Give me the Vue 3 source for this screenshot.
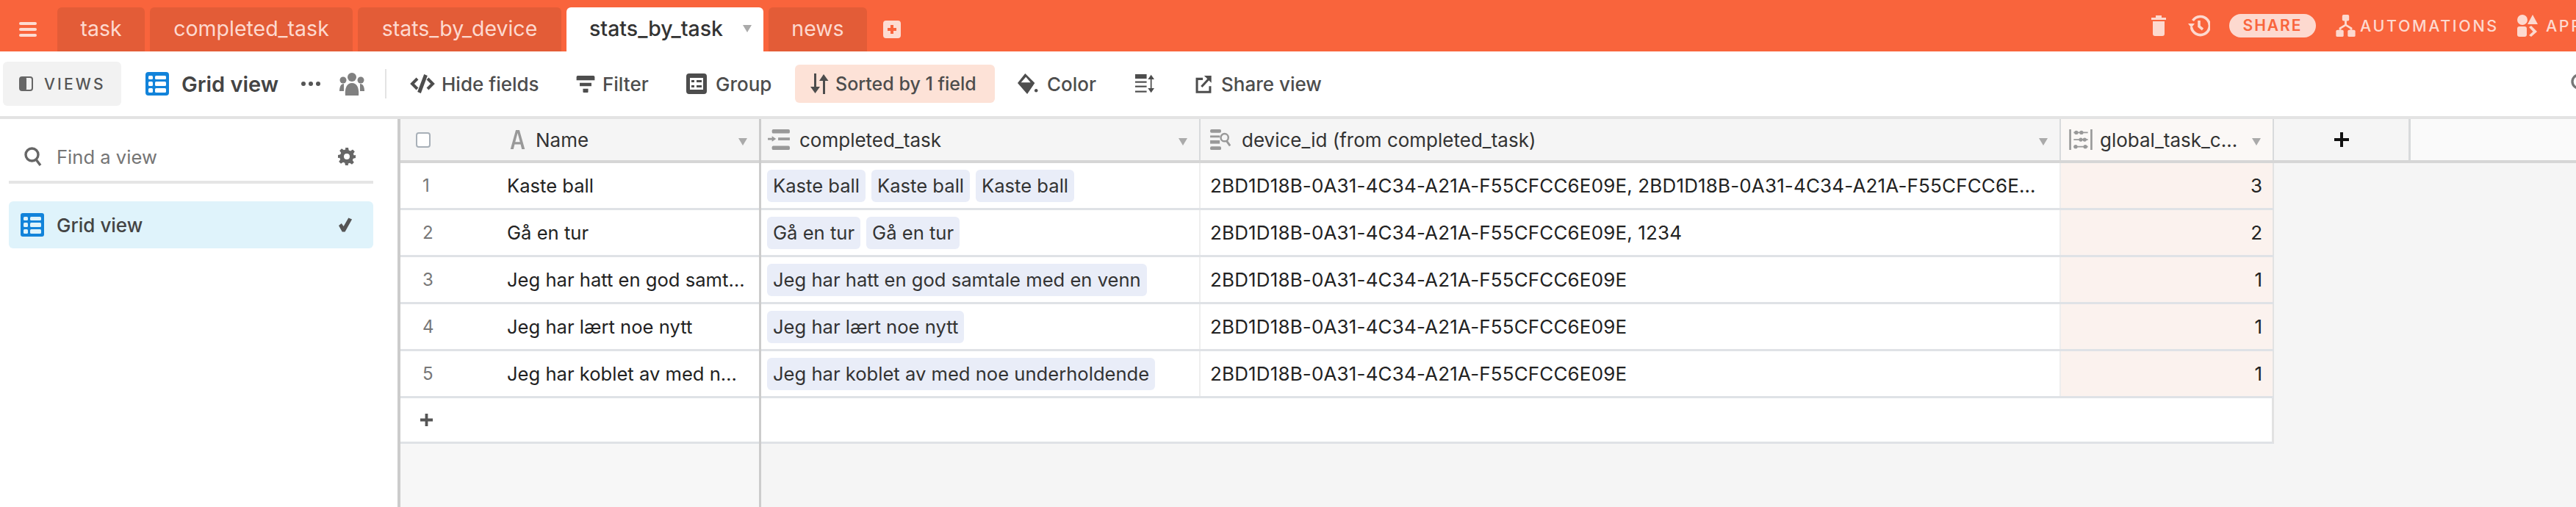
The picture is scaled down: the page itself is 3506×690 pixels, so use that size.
<script setup>
const tabs = [
  { name: 'task', w: 119 },
  { name: 'completed_task', w: 276 },
  { name: 'stats_by_device', w: 277 },
  { name: 'stats_by_task', w: 268, active: true },
  { name: 'news', w: 134 }
]
const rows = [
  { n: 1, name: 'Kaste ball', pills: ['Kaste ball', 'Kaste ball', 'Kaste ball'], device: '2BD1D18B-0A31-4C34-A21A-F55CFCC6E09E, 2BD1D18B-0A31-4C34-A21A-F55CFCC6E09E, 2BD1D18B-0A31-4C34-A21A-F55CFCC6E09E', count: 3 },
  { n: 2, name: 'Gå en tur', pills: ['Gå en tur', 'Gå en tur'], device: '2BD1D18B-0A31-4C34-A21A-F55CFCC6E09E, 1234', count: 2 },
  { n: 3, name: 'Jeg har hatt en god samtale med en venn', pills: ['Jeg har hatt en god samtale med en venn'], device: '2BD1D18B-0A31-4C34-A21A-F55CFCC6E09E', count: 1 },
  { n: 4, name: 'Jeg har lært noe nytt', pills: ['Jeg har lært noe nytt'], device: '2BD1D18B-0A31-4C34-A21A-F55CFCC6E09E', count: 1 },
  { n: 5, name: 'Jeg har koblet av med noe underholdende', pills: ['Jeg har koblet av med noe underholdende'], device: '2BD1D18B-0A31-4C34-A21A-F55CFCC6E09E', count: 1 }
]
</script>

<template>
  <div class="app">
    <header class="topbar">
      <svg class="menu" viewBox="0 0 24 20"><rect y="0" width="24" height="4" rx="2"/><rect y="8" width="24" height="4" rx="2"/><rect y="16" width="24" height="4" rx="2"/></svg>
      <nav class="tabs">
        <div v-for="t in tabs" :key="t.name" class="tab" :class="{ active: t.active }" :style="{ width: t.w + 'px' }">
          <span>{{ t.name }}</span>
          <i v-if="t.active" class="tri tab-tri"></i>
        </div>
      </nav>
      <svg class="addtab" viewBox="0 0 24 24"><path fill-rule="evenodd" d="M4 0h16a4 4 0 0 1 4 4v16a4 4 0 0 1-4 4H4a4 4 0 0 1-4-4V4a4 4 0 0 1 4-4zm6 6v4H6v4h4v4h4v-4h4v-4h-4V6z"/></svg>
      <div class="top-right">
        <svg class="ti trash" viewBox="0 0 20 28"><path d="M6 0h8v3h6v3H0V3h6zM2 8h16v17a3 3 0 0 1-3 3H5a3 3 0 0 1-3-3z"/></svg>
        <svg class="hist" viewBox="0 0 30 30"><g fill="none" stroke="#fdd9cf" stroke-width="3.6"><path d="M6.500 8a12.500 12.500 0 1 1-2 9"/><path d="M15 8v8l5 4"/></g><path d="M0 12h9l-4.500 6z" fill="#fdd9cf"/></svg>
        <div class="share">SHARE</div>
        <svg class="ti auto" viewBox="0 0 28 32"><rect x="9" y="0" width="10" height="9" rx="2"/><path d="M12.500 8h3v6l8 5v3h-3v-1.500l-6.500-4-6.500 4V22h-3v-3l8-5z"/><rect x="0" y="22" width="11" height="10" rx="2"/><rect x="17" y="22" width="11" height="10" rx="2"/></svg>
        <span class="top-label auto-label">AUTOMATIONS</span>
        <svg class="ti apps" viewBox="0 0 28 30"><circle cx="7" cy="7" r="7"/><path d="M21 0l7 13H14z"/><rect x="0" y="16" width="13" height="14" rx="3"/><path d="M16 17l3-2 8 8-8 7-3-2 5.500-5z"/></svg>
        <span class="top-label">APPS</span>
      </div>
    </header>

    <div class="toolbar">
      <div class="views">
        <svg class="ic16" viewBox="0 0 19 20"><rect x="1" y="1" width="17" height="18" rx="3" fill="none" stroke="#666" stroke-width="2"/><rect x="1" y="1" width="9" height="18" rx="2" fill="#666"/></svg>
        <span>VIEWS</span>
      </div>
      <svg class="gridicon big" viewBox="0 0 32 32"><rect width="32" height="32" rx="4" fill="#1283da"/><g fill="#fff"><rect x="4" y="5" width="6" height="5" rx="1.500"/><rect x="13" y="5" width="15" height="5" rx="1.500"/><rect x="4" y="13" width="6" height="6" rx="1.500"/><rect x="13" y="13" width="15" height="6" rx="1.500"/><rect x="4" y="22" width="6" height="6" rx="1.500"/><rect x="13" y="22" width="15" height="6" rx="1.500"/></g></svg>
      <span class="viewname">Grid view</span>
      <svg class="dots" viewBox="0 0 26 6"><circle cx="3" cy="3" r="3"/><circle cx="13" cy="3" r="3"/><circle cx="23" cy="3" r="3"/></svg>
      <svg class="people" viewBox="0 0 34 32"><circle cx="17" cy="7" r="6"/><circle cx="5" cy="11" r="4.500"/><circle cx="29" cy="11" r="4.500"/><path d="M8 32c-1-10 2-17 9-17s10 7 9 17z"/><path d="M0 26c0-6 2-10 6-10v10zM34 26c0-6-2-10-6-10v10z"/></svg>
      <div class="divider"></div>
      <div class="tool tool-hide">
        <svg viewBox="0 0 34 26" class="t-ic hide-ic"><g fill="none" stroke="#4d4d4d" stroke-width="4"><path d="M10 6l-7 7 7 7"/><path d="M24 6l7 7-7 7"/><path d="M21.500 1L12.500 25" stroke-width="5"/></g></svg>
        <span>Hide fields</span>
      </div>
      <div class="tool tool-filter">
        <svg viewBox="0 0 28 26" class="t-ic filter-ic"><path fill="#4d4d4d" d="M0 2a2 2 0 0 1 2-2h24a2 2 0 0 1 2 2v5H0zM5 11h18v5H5zM10 20h8v5a1 1 0 0 1-1 1h-6a1 1 0 0 1-1-1z"/></svg>
        <span>Filter</span>
      </div>
      <div class="tool tool-group">
        <svg viewBox="0 0 28 28" class="t-ic group-ic"><path fill="#4d4d4d" fill-rule="evenodd" d="M4 0h20a4 4 0 0 1 4 4v20a4 4 0 0 1-4 4H4a4 4 0 0 1-4-4V4a4 4 0 0 1 4-4zm1 6v16h18V6zm2 3h4v3H7zm7 0h7v3h-7zM7 16h4v3H7zm7 0h7v3h-7z"/></svg>
        <span>Group</span>
      </div>
      <div class="tool sorted">
        <svg viewBox="0 0 26 28" class="t-ic sort-ic"><path fill="#4d4d4d" d="M6 0h3v18h5l-6.500 9L1 18h5zM19 1l6.500 9H21v18h-3V10h-5z"/></svg>
        <span>Sorted by 1 field</span>
      </div>
      <div class="tool tool-color">
        <svg viewBox="0 0 30 30" class="t-ic color-ic"><path fill="#4d4d4d" fill-rule="evenodd" d="M11 0l14 14-11 16L0 14zm1 5l-7 8h14z"/><circle cx="27" cy="25" r="2.400" fill="#4d4d4d"/></svg>
        <span>Color</span>
      </div>
      <svg class="rowh" viewBox="0 0 30 30"><g fill="#4d4d4d"><rect x="0" y="0" width="18" height="7"/><rect x="0" y="11" width="18" height="2.500"/><rect x="0" y="18" width="18" height="2.500"/><rect x="0" y="26" width="18" height="2.500"/><path d="M25 1l5 7h-4v14h4l-5 7-5-7h4V8h-4z"/></g></svg>
      <div class="tool tool-share">
        <svg viewBox="0 0 24 28" class="t-ic share-ic"><g fill="none" stroke="#4d4d4d" stroke-width="3.400"><path d="M11 6H2v20h20v-9"/><path d="M9 18L21 5"/></g><path fill="#4d4d4d" d="M13 1h11v11z"/></svg>
        <span>Share view</span>
      </div>
      <svg class="far-search" viewBox="0 0 24 24" fill="none" stroke="#777" stroke-width="3.400"><circle cx="12" cy="11" r="9"/></svg>
    </div>

    <main class="main">
      <aside class="sidebar">
        <div class="findrow">
          <svg class="search" viewBox="0 0 24 26" fill="none" stroke="#666" stroke-width="3.400"><circle cx="10.500" cy="10.500" r="8.500"/><path d="M16 17l6 8"/></svg>
          <span class="findtext">Find a view</span>
          <svg class="gear" viewBox="0 0 24 24"><path fill="#666" fill-rule="evenodd" d="M10 0h4l.7 3.500 2.300 1 3-2 2.800 2.800-2 3 1 2.300L24 10v4l-3.200.7-1 2.300 2 3-2.800 2.800-3-2-2.300 1L14 24h-4l-.7-3.200-2.300-1-3 2L1.200 19l2-3-1-2.300L0 14v-4l3.200-.7 1-2.300-2-3L5 1.200l3 2 2.300-1zM12 8a4 4 0 1 0 0 8 4 4 0 0 0 0-8z"/></svg>
        </div>
        <div class="sideline"></div>
        <div class="viewitem">
          <svg class="gridicon small" viewBox="0 0 32 32"><rect width="32" height="32" rx="3" fill="#1283da"/><g fill="#dff3fb"><rect x="4" y="5" width="6" height="5" rx="1.500"/><rect x="13" y="5" width="15" height="5" rx="1.500"/><rect x="4" y="13" width="6" height="6" rx="1.500"/><rect x="13" y="13" width="15" height="6" rx="1.500"/><rect x="4" y="22" width="6" height="6" rx="1.500"/><rect x="13" y="22" width="15" height="6" rx="1.500"/></g></svg>
          <span>Grid view</span>
          <svg class="check" viewBox="0 0 20 20"><path fill="#555" d="M0 11l4-3 3 4L14 0l5 2-10 18H5z"/></svg>
        </div>
      </aside>

      <section class="pane left-pane">
        <div class="hrow">
          <div class="hleft">
            <span class="checkbox"></span>
            <svg class="afont" viewBox="0 0 24 32"><path fill="#999" d="M9 0h6l9 32h-5l-2-8H7l-2 8H0zm-1 20h8L12 5z"/></svg>
            <span class="htext">Name</span>
            <i class="tri hdr-tri"></i>
          </div>
        </div>
        <div v-for="r in rows" :key="r.n" class="row lrow">
          <span class="rownum">{{ r.n }}</span>
          <span class="rname">{{ r.name }}</span>
        </div>
        <div class="row lrow addrow">
          <svg class="addplus" viewBox="0 0 18 18"><path fill="#555" d="M7 0h4v7h7v4h-7v7H7v-7H0V7h7z"/></svg>
        </div>
      </section>

      <section class="pane right-pane">
        <div class="hrow">
          <div class="hcell c1">
            <svg class="fi" viewBox="0 0 32 30"><g fill="#999"><rect x="6" y="0" width="26" height="6" rx="2"/><rect x="15" y="12" width="17" height="4"/><path d="M0 12.500h6V10l6 4-6 4v-2.500H0z"/><rect x="6" y="24" width="26" height="6" rx="2"/></g></svg>
            <span class="htext">completed_task</span>
            <i class="tri hdr-tri"></i>
          </div>
          <div class="hcell c2">
            <svg class="fi" viewBox="0 0 32 30"><g fill="#999"><rect x="0" y="0" width="16" height="5" rx="2"/><rect x="0" y="9" width="14" height="3"/><rect x="0" y="16" width="14" height="5"/><rect x="0" y="25" width="16" height="5" rx="2"/></g><circle cx="21" cy="12" r="5.500" fill="none" stroke="#999" stroke-width="2.600"/><path d="M24 17l5 7" stroke="#999" stroke-width="3"/></svg>
            <span class="htext">device_id (from completed_task)</span>
            <i class="tri hdr-tri"></i>
          </div>
          <div class="hcell c3 tinted">
            <svg class="fi abacus" viewBox="0 0 36 32"><g fill="#999"><rect x="0" y="0" width="3" height="32"/><rect x="33" y="0" width="3" height="32"/><rect x="7" y="4" width="22" height="2"/><circle cx="11" cy="5" r="3"/><circle cx="19" cy="5" r="3"/><rect x="7" y="15" width="22" height="2"/><circle cx="18" cy="16" r="3"/><circle cx="24" cy="16" r="3"/><rect x="7" y="26" width="22" height="2"/><circle cx="10" cy="27" r="3"/><circle cx="25" cy="27" r="3"/></g></svg>
            <span class="htext">global_task_c...</span>
            <i class="tri hdr-tri"></i>
          </div>
          <div class="hcell c4">
            <svg class="plus" viewBox="0 0 20 20"><path fill="#111" d="M8 0h4v8h8v4h-8v8H8v-8H0V8h8z"/></svg>
          </div>
          <div class="hfill"></div>
        </div>
        <div v-for="r in rows" :key="r.n" class="row rrow">
          <div class="cell c1">
            <span v-for="(p, i) in r.pills" :key="i" class="pill">{{ p }}</span>
          </div>
          <div class="cell c2"><span class="devtext">{{ r.device }}</span></div>
          <div class="cell c3 num">{{ r.count }}</div>
        </div>
        <div class="row rrow addrow-r"></div>
      </section>
    </main>
  </div>
</template>

<style>
html, body { margin: 0; padding: 0; background: #fff; }
</style>

<style scoped>
.app {
  width: 3506px; height: 690px; overflow: hidden; display: flex; flex-direction: column;
  font-family: Inter, "Noto Sans", sans-serif; font-size: 26px; color: #222; background: #fff;
}
.topbar { height: 70px; flex: none; background: #f9643c; display: flex; align-items: flex-end; position: relative; }
.menu { width: 24px; height: 20px; fill: #fddcd2; margin: 0 28px 20px 26px; flex: none; }
.tabs { display: flex; gap: 7px; height: 60px; }
.tab {
  height: 60px; background: #e35c37; border-radius: 6px 6px 0 0; color: #fdd9cf;
  display: flex; align-items: center; justify-content: center; font-size: 28.5px; position: relative; padding-bottom: 4px; box-sizing: border-box;
}
.tab.active { background: #fff; color: #333; font-weight: 500; padding-right: 24px; }
.tab-tri { position: absolute; right: 16px; top: 24px; }
.tri { display: block; width: 0; height: 0; border-left: 6px solid transparent; border-right: 6px solid transparent; border-top: 10px solid #aaa; flex: none; }
.addtab { width: 24px; height: 24px; fill: #fddcd2; margin: 0 0 18px 22px; flex: none; }
.top-right { position: absolute; left: 2928px; top: 0; width: 578px; height: 70px; display: flex; align-items: center; overflow: hidden; white-space: nowrap; }
.ti { fill: #fdd9cf; flex: none; }
.trash { width: 20px; height: 28px; margin-right: 30px; margin-top: -1px; }
.hist { width: 30px; height: 30px; margin-right: 26px; margin-top: -1px; flex: none; }
.share {
  width: 118px; height: 32px; border-radius: 16px; background: #fdd9cf; color: #f9643c; flex: none;
  font-size: 21px; font-weight: 600; letter-spacing: 2px; display: flex; align-items: center; justify-content: center; margin-right: 27px; margin-top: -1px;
}
.auto { width: 27px; height: 30px; margin-right: 6px; }
.top-label { color: #fdd9cf; font-size: 21.5px; font-weight: 500; letter-spacing: 2.6px; flex: none; }
.auto-label { width: 186px; margin-right: 28px; }
.apps { width: 28px; height: 30px; margin-right: 11px; }

.toolbar { height: 88px; flex: none; box-sizing: content-box; border-bottom: 4px solid #e3e3e3; display: flex; align-items: center; position: relative; font-size: 26px; color: #4d4d4d; }
.views { width: 161px; height: 60px; margin-left: 4px; background: #f2f2f2; border-radius: 6px; display: flex; align-items: center; color: #555; font-size: 21px; font-weight: 500; letter-spacing: 3.2px; box-sizing: border-box; padding-left: 22px; gap: 15px; flex: none; }
.ic16 { width: 19px; height: 20px; flex: none; }
.gridicon { flex: none; }
.gridicon.big { width: 32px; height: 32px; margin-left: 33px; }
.viewname { font-size: 29px; font-weight: 600; color: #444; margin-left: 17px; width: 133px; white-space: nowrap; flex: none; }
.dots { width: 26px; height: 6px; fill: #555; margin-left: 30px; flex: none; }
.people { width: 34px; height: 32px; fill: #808080; margin-left: 26px; flex: none; }
.divider { width: 2px; height: 40px; background: #e3e3e3; margin-left: 28px; flex: none; }
.tool { display: flex; align-items: center; white-space: nowrap; flex: none; font-weight: 500; }
.t-ic { height: 26px; flex: none; }
.hide-ic { width: 34px; }
.filter-ic { width: 28px; height: 23px; }
.group-ic { width: 28px; height: 28px; }
.sort-ic { width: 26px; height: 28px; }
.color-ic { width: 30px; height: 28px; }
.share-ic { width: 24px; height: 25px; }
.tool span { margin-left: 9px; }
.tool-hide { margin-left: 32px; width: 176px; }
.tool-filter { margin-left: 49px; width: 102px; }
.tool-group { margin-left: 49px; width: 116px; }
.tool-group span { margin-left: 12px; }
.sorted { margin-left: 32px; width: 272px; height: 52px; background: #fde2d7; border-radius: 6px; box-sizing: border-box; padding-left: 20px; font-size: 25px; }
.tool-color { margin-left: 30px; width: 107px; }
.tool-color span { margin-left: 11px; }
.rowh { width: 30px; height: 26px; margin-left: 52px; flex: none; }
.tool-share { margin-left: 53px; }
.tool-share span { margin-left: 12px; }
.far-search { position: absolute; left: 3498px; top: 30px; width: 24px; height: 24px; }

.main { flex: 1; display: flex; min-height: 0; background: #f5f5f5; }
.sidebar { width: 541px; flex: none; background: #fff; border-right: 4px solid #ccc; display: flex; flex-direction: column; }
.findrow { height: 84px; padding-top: 18px; box-sizing: border-box; display: flex; align-items: center; flex: none; position: relative; color: #757575; font-size: 25.6px; }
.search { width: 24px; height: 26px; margin-left: 33px; flex: none; }
.findtext { margin-left: 20px; flex: 1; }
.gear { width: 24px; height: 24px; margin-right: 57px; flex: none; }
.sideline { height: 4px; background: #e5e5e5; margin: 0 33px 0 12px; flex: none; }
.viewitem { height: 64px; margin: 24px 33px 0 12px; border-radius: 6px; background: #dff3fb; display: flex; align-items: center; color: #444; font-size: 26px; font-weight: 500; flex: none; }
.gridicon.small { width: 32px; height: 32px; margin-left: 16px; }
.viewitem span { margin-left: 17px; flex: 1; }
.check { width: 19px; height: 20px; margin-right: 28px; flex: none; }

.pane { display: flex; flex-direction: column; }
.left-pane { width: 491px; flex: none; background: #f7f7f7; border-right: 3px solid #ccc; box-sizing: border-box; }
.right-pane { flex: 1; min-width: 0; }
.hrow { height: 60px; flex: none; display: flex; background: #f5f5f5; box-sizing: border-box; border-bottom: 4px solid #d6d6d6; position: relative; }
.hleft { flex: 1; display: flex; align-items: center; position: relative; }
.checkbox { width: 20px; height: 21px; border: 2px solid #a8b0b8; border-radius: 4px; background: #fff; margin-left: 21px; flex: none; box-sizing: border-box; }
.afont { width: 23px; height: 26px; margin-left: 107px; flex: none; }
.htext { font-size: 26px; color: #333; margin-left: 12px; white-space: nowrap; overflow: hidden; }
.hleft .htext { margin-left: 13px; }
.hdr-tri { position: absolute; right: 16px; top: 26px; }
.hcell { height: 56px; flex: none; display: flex; align-items: center; position: relative; box-sizing: border-box; border-right: 2px solid #d8dadc; }
.c1 { width: 598px; }
.c2 { width: 1171px; }
.c3 { width: 290px; }
.c4 { width: 186px; justify-content: center; border-right-width: 3px; }
.hfill { flex: 1; background: #fafafa; }
.fi { width: 32px; height: 28px; margin-left: 8px; flex: none; }
.c2 .fi { margin-left: 12px; }
.abacus { width: 32px; height: 28px; margin-left: 11px; }
.c3 .htext { margin-left: 10px; }
.tinted { background: #fbf8f6; }
.plus { width: 20px; height: 20px; }
.row { display: flex; background: #fff; box-sizing: border-box; flex: none; }
.lrow { height: 64px; border-bottom: 3px solid #dfe2e6; align-items: center; }
.rownum { width: 145px; padding-left: 30px; box-sizing: border-box; color: #777; font-size: 24px; flex: none; }
.rname { width: 326px; flex: none; white-space: nowrap; overflow: hidden; text-overflow: ellipsis; font-size: 25.6px; color: #222; }
.addrow { height: 62px; }
.addplus { width: 17px; height: 17px; margin-left: 27px; }
.rrow { width: 2059px; height: 64px; border-bottom: 3px solid #dfe2e6; }
.cell { height: 61px; box-sizing: border-box; display: flex; align-items: center; flex: none; border-right: 2px solid #eeeeee; }
.pill { height: 44px; padding: 0 8px; margin-right: 8px; background: #e9edf8; border-radius: 6px; display: flex; align-items: center; color: #333; font-size: 25.6px; white-space: nowrap; box-sizing: border-box; }
.cell.c1 { padding-left: 8px; }
.cell.c2 { padding: 0 20px 0 13px; }
.devtext { display: block; width: 100%; white-space: nowrap; overflow: hidden; text-overflow: ellipsis; font-size: 26px; letter-spacing: 0.15px; color: #222; }
.num { justify-content: flex-end; padding-right: 14px; background: #fbf2ee; font-size: 26px; color: #222; border-right: 2px solid #e2e2e2; }
.addrow-r { height: 62px; border-right: 3px solid #e2e2e2; }
</style>
